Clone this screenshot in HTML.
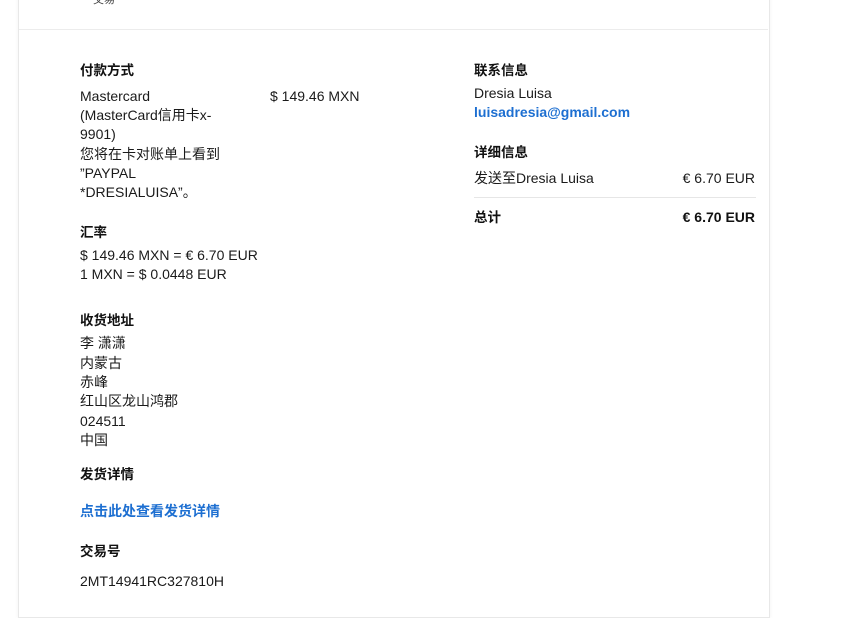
<!DOCTYPE html>
<html><head><meta charset="utf-8"><style>
html,body{margin:0;padding:0;background:#fff;width:867px;height:618px;overflow:hidden}
body{font-family:"Liberation Sans","Noto Sans CJK SC",sans-serif;color:#1a1a1a;font-size:14px;position:relative}
.card{position:absolute;left:18px;top:-10px;width:750px;height:626px;border:1px solid #e8e8e8;box-shadow:0 0 4px rgba(0,0,0,.06);background:#fff}
.hr{position:absolute;left:19px;width:749px;top:29px;height:1px;background:#ececec}
.t{position:absolute;white-space:nowrap;line-height:19px}
.b{font-weight:bold;color:#111;font-size:13.5px}
.l{color:#1d6fd1;font-weight:bold}
.r{text-align:right}
</style></head><body>
<div class="card"></div>
<div class="hr"></div>
<div class="t" style="left:93px;top:-9px;font-size:11px;color:#444">交易</div>

<div class="t b" style="left:80px;top:61px">付款方式</div>
<div class="t" style="left:80px;top:87px">Mastercard</div>
<div class="t" style="left:80px;top:106px">(MasterCard信用卡x-</div>
<div class="t" style="left:80px;top:125px">9901)</div>
<div class="t" style="left:80px;top:145px">您将在卡对账单上看到</div>
<div class="t" style="left:80px;top:164px">”PAYPAL</div>
<div class="t" style="left:80px;top:183px">*DRESIALUISA”。</div>
<div class="t" style="left:270px;top:87px">$ 149.46 MXN</div>

<div class="t b" style="left:80px;top:223px">汇率</div>
<div class="t" style="left:80px;top:246px">$ 149.46 MXN = € 6.70 EUR</div>
<div class="t" style="left:80px;top:265px">1 MXN = $ 0.0448 EUR</div>

<div class="t b" style="left:80px;top:311px">收货地址</div>
<div class="t" style="left:80px;top:334px">李 潇潇</div>
<div class="t" style="left:80px;top:354px">内蒙古</div>
<div class="t" style="left:80px;top:373px">赤峰</div>
<div class="t" style="left:80px;top:392px">红山区龙山鸿郡</div>
<div class="t" style="left:80px;top:412px">024511</div>
<div class="t" style="left:80px;top:431px">中国</div>

<div class="t b" style="left:80px;top:465px">发货详情</div>
<div class="t l" style="left:80px;top:502px">点击此处查看发货详情</div>
<div class="t b" style="left:80px;top:542px">交易号</div>
<div class="t" style="left:80px;top:572px">2MT14941RC327810H</div>

<div class="t b" style="left:474px;top:61px">联系信息</div>
<div class="t" style="left:474px;top:84px">Dresia Luisa</div>
<div class="t l" style="left:474px;top:103px">luisadresia@gmail.com</div>
<div class="t b" style="left:474px;top:143px">详细信息</div>
<div class="t" style="left:474px;top:169px">发送至Dresia Luisa</div>
<div class="t r" style="left:655px;width:100px;top:169px">€ 6.70 EUR</div>
<div style="position:absolute;left:474px;top:197px;width:282px;height:1px;background:#e6e6e6"></div>
<div class="t b r" style="left:655px;width:100px;top:208px;font-size:14px">€ 6.70 EUR</div>
<div class="t b" style="left:474px;top:208px">总计</div>
</body></html>
